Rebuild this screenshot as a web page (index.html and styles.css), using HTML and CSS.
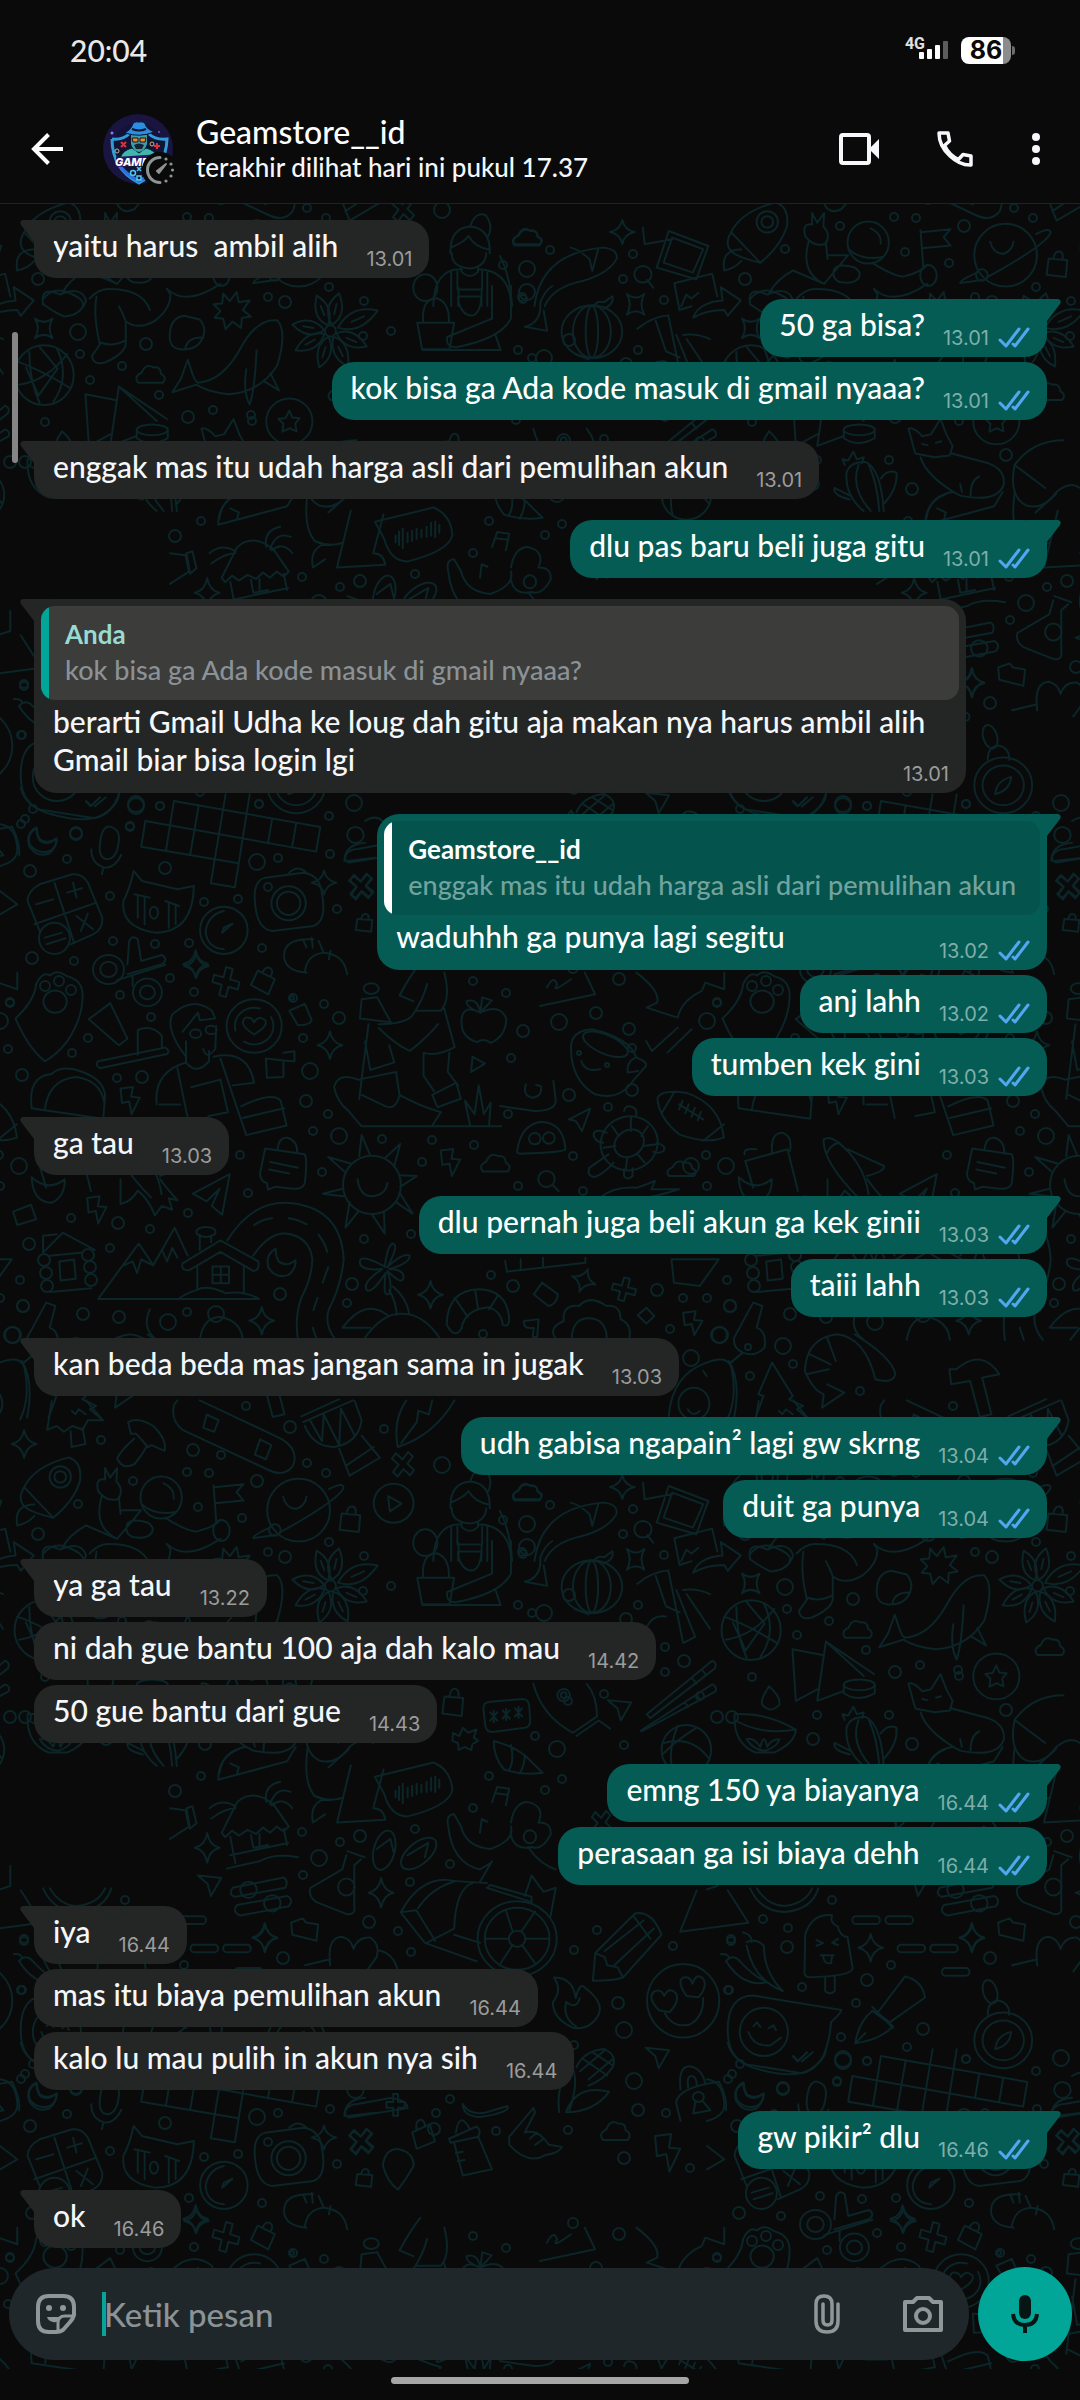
FILE: index.html
```html
<!DOCTYPE html>
<html lang="id">
<head>
    <meta charset="UTF-8">
    <meta name="viewport" content="width=device-width, initial-scale=1.0">
    <title>Geamstore__id</title>
    <link rel="stylesheet" href="styles.css">
</head>
<body>
    <!-- Status bar -->
    <div class="status-bar">
        <span class="clock">20:04</span>
        <div class="status-icons">
            <span class="network">4G</span>
            <svg class="signal" width="30" height="20" viewBox="0 0 30 20">
                <rect x="0" y="12" width="5" height="7" rx="1" fill="#fff"/>
                <rect x="8" y="9" width="5" height="10" rx="1" fill="#fff"/>
                <rect x="16" y="5" width="5" height="14" rx="1" fill="#fff"/>
                <rect x="24" y="1" width="5" height="18" rx="1" fill="#5c5c5c"/>
            </svg>
            <div class="battery">86</div>
            <span class="battery-cap"></span>
        </div>
    </div>

    <!-- Chat header -->
    <header class="header">
        <button class="icon-btn back" aria-label="Kembali">
            <svg width="36" height="36" viewBox="0 0 36 36" fill="none" stroke="#fff" stroke-width="4">
                <path d="M18.500 3.500L4 18L18.500 32.500M4 18H33"/>
            </svg>
        </button>
        <div class="avatar">
            <svg width="72" height="72" viewBox="0 0 72 72">
                <circle cx="35" cy="36" r="35" fill="#191440"/>
                <circle cx="35" cy="36" r="26" fill="#14123a"/>
                <circle cx="9" cy="20" r="1.500" fill="#7c80ff"/>
                <circle cx="56" cy="19" r="1" fill="#6a5cc8"/>
                <path d="M9 26Q20 27 26 21M9 26Q9 56 36 70Q63 56 64 26Q52 27 46 21" fill="#101536" stroke="#2f9bd8" stroke-width="3"/>
                <path d="M17 53Q24 62 36 68Q48 62 55 53" fill="none" stroke="#2c6fe0" stroke-width="3"/>
                <path d="M17 45Q20 37 29 35L36 40L43 35Q52 37 55 45Z" fill="#3fb6ac" stroke="#0a1a2e"/>
                <path d="M28 22H44V31Q42 38 36 39Q30 38 28 31Z" fill="#3a9fa5"/>
                <path d="M22 20Q28 16 29 13Q30 8 36 9Q42 8 43 13Q44 16 51 19Q37 25 22 20Z" fill="#2b8ee0" stroke="#0b1835"/>
                <path d="M29 16Q36 19 43 16" fill="none" stroke="#0b1835" stroke-width="2"/>
                <path d="M29 25H35V29H30ZM37 25H43L42 29H37Z" fill="#e8892b" stroke="#231018"/>
                <path d="M31 32Q36 29 41 32L39 36H33Z" fill="#132338"/>
                <path d="M18 29L23 34M23 29L18 34M54 30V36M51 33H57" stroke="#e0303c" stroke-width="2"/>
                <circle cx="14" cy="38" r="2" fill="none" stroke="#c8b48a"/>
                <circle cx="49" cy="31" r="2" fill="none" stroke="#c8b48a"/>
                <path d="M13 44L58 41L56 51L13 54Z" fill="#2a1763"/>
                <text class="avatar-text" x="12" y="53">GAME</text>
                <path d="M34 54L38 58M38 54L34 58" stroke="#52c8ea" stroke-width="1.500"/>
                <circle cx="30" cy="60" r="2.500" fill="none" stroke="#52c8ea" stroke-width="1.500"/>
                <rect x="34" y="63" width="4" height="4" fill="none" stroke="#52c8ea" stroke-width="1.500"/>
            </svg>
            <svg class="timer" width="38" height="38" viewBox="0 0 38 38">
                <circle cx="19" cy="19" r="18" fill="#0a0a0a"/>
                <path d="M19 6.500A12.500 12.500 0 0 0 19 31.500" fill="none" stroke="#8d9496" stroke-width="3" stroke-linecap="round"/>
                <path d="M16 20L25 13L18 22Z" fill="#8d9496" stroke="#8d9496" stroke-width="2" stroke-linejoin="round"/>
                <g fill="#8d9496">
                    <circle cx="25" cy="8" r="1.600"/><circle cx="30" cy="13" r="1.600"/><circle cx="31.500" cy="19" r="1.600"/>
                    <circle cx="30" cy="25" r="1.600"/><circle cx="25" cy="30" r="1.600"/>
                </g>
            </svg>
        </div>
        <div class="contact">
            <h1>Geamstore__id</h1>
            <p>terakhir dilihat hari ini pukul 17.37</p>
        </div>
        <div class="header-actions">
            <button class="icon-btn" aria-label="Panggilan video">
                <svg width="40" height="36" viewBox="0 0 40 36">
                    <rect x="2" y="4" width="28" height="28" rx="2" fill="none" stroke="#f5f7fa" stroke-width="4"/>
                    <path d="M31 17L40 8V28L31 19Z" fill="#f5f7fa"/>
                </svg>
            </button>
            <button class="icon-btn" aria-label="Panggilan suara">
                <svg width="38" height="38" viewBox="0 0 38 38" fill="none" stroke="#f5f7fa" stroke-width="3.500" stroke-linejoin="round">
                    <path d="M3 3H12L13.500 11L8.500 15.500Q13 25 22.500 29.500L27 24.500L35 26V35Q24 35.500 14 26Q3 16 3 3Z"/>
                </svg>
            </button>
            <button class="icon-btn" aria-label="Menu">
                <svg width="10" height="34" viewBox="0 0 10 34" fill="#f5f7fa">
                    <circle cx="5" cy="5" r="4"/><circle cx="5" cy="17" r="4"/><circle cx="5" cy="29" r="4"/>
                </svg>
            </button>
        </div>
    </header>

    <main class="chat">
        <!-- Doodle wallpaper, one 707x1255 tile repeated in both directions -->
        <svg class="wallpaper" aria-hidden="true">
            <defs>
                <path id="star" d="M0 -36Q6 -6 36 0Q6 6 0 36Q-6 6 -36 0Q-6 -6 0 -36Z"/>
                <path id="plus" d="M-10 -38H10V-10H38V10H10V38H-10V10H-38V-10H-10Z"/>
                <path id="bolt" d="M-28 -32L8 -36L3 -10L28 -8L4 35L-3 2L-24 6Z"/>
                <path id="moon" d="M-18 -38Q-50 -22 -38 12Q-16 42 20 30Q42 14 40 -8Q12 12 -10 -6Q-18 -20 -18 -38Z"/>
                <path id="cloud" d="M-36 20Q-50 4 -26 -6Q-14 -32 8 -20Q30 -22 30 -4Q50 6 36 20Z"/>
                <path id="arrow" d="M-34 -20L34 -14L4 30L-6 0Z"/>
                <path id="petal" d="M0 -18Q-34 -60 0 -112Q32 -60 0 -18M0 -50V-80"/>
                <path id="bag" d="M-28 -14L26 -10L22 34L-34 28ZM-14 -14Q-10 -36 6 -32Q16 -28 12 -12"/>
                <g id="doodles">
                    <g transform="scale(.3444 .3827)">
                        <path d="M130 262Q80 225 45 150Q100 105 105 60Q125 25 145 38Q165 20 195 40Q240 50 240 90Q240 150 195 210Q165 245 130 262"/>
                        <ellipse cx="160" cy="106" rx="34" ry="29"/>
                        <path d="M258 152L320 110L370 203L345 220ZM400 245V180Q440 165 470 195V225M285 262L480 226Q495 235 485 243L290 280Q275 272 285 262"/>
                        <ellipse cx="315" cy="22" rx="45" ry="38"/><ellipse cx="315" cy="22" rx="24" ry="20"/>
                        <ellipse cx="428" cy="82" rx="42" ry="36"/><ellipse cx="428" cy="82" rx="22" ry="18"/>
                        <path d="M340 50L480 10M385 40V65"/>
                        <path d="M540 250Q480 180 500 140Q560 90 615 130L625 150L580 155L575 135L530 185M628 170L625 230Q600 260 590 230M540 210V265Q570 300 607 262V235M455 375Q445 290 540 265M620 250Q720 230 738 318L675 325M515 280L545 410M640 255L715 455L832 430L815 365Q790 340 700 380M463 375H523M555 330L640 310L662 395L605 405M705 410L825 385"/>
                        <ellipse cx="568" cy="190" rx="16" ry="11"/><ellipse cx="613" cy="180" rx="16" ry="11"/>
                        <ellipse cx="738" cy="170" rx="80" ry="70"/><ellipse cx="738" cy="170" rx="56" ry="48" stroke-dasharray="40 14"/>
                        <path d="M738 192Q690 165 712 148Q730 145 738 160Q750 140 770 155Q780 170 738 192"/>
                        <path d="M840 130L885 112L905 154Q900 168 865 168ZM772 255L823 260V303L775 305ZM823 240L855 236V262L823 260"/>
                        <path d="M1160 90Q1190 40 1220 5M1290 30Q1310 100 1280 130H1210M1160 90L1200 105M1240 60Q1230 100 1195 145Q1170 165 1100 165M1045 150L1050 100L1095 95L1135 160ZM1100 175Q1150 220 1190 235Q1240 200 1272 165M1290 125L1320 225Q1270 250 1230 240V300L1260 340M1305 240L1300 290L1330 325M1255 350L1325 318L1338 360L1270 382ZM1060 210L1075 285L1145 265L1130 220M1070 165L1043 360M970 330Q980 290 1040 310L1150 290L1160 350Q1150 390 1120 380L1050 350M970 330Q980 370 1010 390L1050 432H1455M1160 350Q1220 380 1280 395L1255 430M1365 430L1350 365L1378 400L1390 325L1405 400L1425 370L1420 430"/>
                        <ellipse cx="1078" cy="72" rx="22" ry="14"/>
                        <path d="M1395 135Q1340 110 1340 160Q1340 200 1385 212Q1405 200 1425 214Q1470 195 1470 150Q1450 110 1395 135Q1350 120 1355 105Q1385 95 1395 135L1400 95L1428 103L1400 130M1372 250L1408 268L1368 290Z"/>
                        <path d="M92 385Q80 300 150 295Q180 270 240 290Q300 310 305 350L300 412L130 390Q140 310 220 303Q290 310 303 370M92 385L130 390"/>
                        <path d="M770 490L885 505Q893 520 885 580Q880 597 850 595L800 590L778 597L775 580Q755 575 755 555ZM785 525L865 540M782 545L840 555M806 490Q810 460 835 462Q865 470 863 503"/>
                        <ellipse cx="1080" cy="585" rx="84" ry="76"/>
                        <path d="M1043 510L1050 455L1075 508M1118 515L1162 478L1145 535M1160 560L1210 562L1162 590M1150 630L1198 660L1160 605M1080 662L1117 712L1115 658M1040 655L1003 697L1015 630M995 595L937 608L997 615M1000 550L953 512L1020 530M1038 570Q1045 615 1080 615Q1120 612 1125 580"/>
                        <path d="M560 608L667 557L645 663L615 640L638 595L600 628ZM92 565Q95 630 150 632Q190 615 188 570Q140 605 92 565M350 570V635Q380 630 400 600Q430 620 450 665L470 640L500 650L490 620L515 625Q480 590 465 570M38 655L90 637L105 675L50 690Z"/>
                        <path d="M125 762L182 710L275 755M125 718L165 714M125 718V760M145 865L265 855M145 770L240 762M172 785L215 780L220 830L176 835Z"/>
                        <path d="M285 883H752Q710 860 655 868Q600 845 570 860Q540 868 518 883M285 883L403 738L445 795L507 697L545 770M360 795L385 785L398 815L410 780L445 795M470 755L485 785L500 750L515 775M530 790L640 730L750 785Q755 810 735 810L640 760L550 808Q525 810 530 790M573 800V858M708 800V868M617 798H665V842H617ZM641 798V842M617 820H665M580 755V715M613 735V718"/>
                        <ellipse cx="598" cy="708" rx="28" ry="13"/>
                        <path d="M660 730Q730 630 830 632Q990 640 998 780Q990 850 955 910Q940 950 975 990M735 770Q780 710 830 712Q900 720 907 780Q905 830 875 880Q855 930 865 990M738 690Q760 675 790 672M838 672Q865 675 890 688M925 715Q945 740 950 760M953 800L937 840M922 880L910 912M908 958L920 990"/>
                        <path d="M1120 800Q1040 760 1045 790Q1050 810 1110 805Q1050 840 1065 860Q1080 870 1120 815Q1110 880 1130 870Q1140 850 1125 810Q1170 850 1172 825Q1170 805 1130 805Q1190 790 1190 770Q1170 760 1125 800Q1160 740 1140 738Q1125 745 1118 795M1130 860Q1150 890 1152 925M1140 850Q1180 880 1188 920M1055 990Q1110 920 1165 922Q1230 920 1280 990M995 958Q1060 880 1125 925M995 958H1075"/>
                        <path d="M1297 950Q1300 860 1390 858Q1470 860 1478 930Q1480 960 1460 950Q1455 915 1420 905Q1350 910 1340 960Q1320 990 1297 950M1320 880L1358 930M1380 860L1388 910M1445 875L1420 910"/>
                        <path d="M580 990Q590 930 640 930Q700 940 705 990M435 910Q410 960 455 990"/>
                        <path d="M150 1150L137 1225L165 1215L185 1230L210 1215L240 1225L255 1200L298 1200L250 1148M205 1228L208 1270L248 1262L240 1220M372 1205Q400 1190 445 1215Q485 1250 478 1280L440 1265L430 1270L395 1235H380ZM390 1248Q350 1280 340 1300Q355 1330 390 1315Q410 1295 425 1270"/>
                        <path d="M580 1148L820 1250Q870 1280 850 1320Q825 1350 780 1330L530 1225Q495 1200 505 1160L515 1148M590 1220L600 1185L635 1200L622 1230ZM740 1290L755 1250L788 1265L772 1302Z"/>
                        <path d="M875 1190L985 1145M880 1205L1025 1148M885 1215Q910 1270 970 1270Q1040 1260 1050 1200L1030 1150M900 1200L935 1255L940 1185L985 1265L990 1170L1030 1240M985 1275L1015 1345L1103 1298L1050 1240M1003 1320L1085 1270M1155 1270Q1140 1200 1180 1148M1155 1270Q1260 1240 1320 1148M1165 1260L1210 1205L1215 1175L1245 1185L1255 1148"/>
                        <path d="M70 1375Q100 1320 200 1297Q240 1310 232 1360Q215 1410 155 1455L70 1375Q40 1420 100 1440Q130 1450 155 1455M100 1420Q40 1420 50 1475Q80 1470 100 1450"/>
                        <ellipse cx="175" cy="1348" rx="31" ry="28"/><ellipse cx="175" cy="1348" rx="17" ry="15"/>
                        <ellipse cx="468" cy="1402" rx="60" ry="55"/>
                        <path d="M475 1365Q505 1375 505 1405M412 1420Q450 1450 510 1440M340 1510Q270 1480 295 1400M350 1445L345 1400M285 1385Q275 1350 305 1355V1325L320 1350L340 1325L338 1360Q360 1380 345 1405Q310 1415 285 1385M350 1435H410L340 1510L250 1475Q200 1500 180 1535M480 1455Q560 1500 580 1488Q620 1480 640 1460M370 1470Q385 1455 430 1468Q450 1480 440 1495Q425 1512 385 1505Q360 1495 370 1470M620 1370L628 1465M622 1375L707 1367L687 1388L707 1410L625 1417M485 1523Q540 1570 640 1510M125 1550Q150 1520 190 1530Q250 1550 240 1568"/>
                        <ellipse cx="643" cy="1488" rx="24" ry="27"/>
                        <ellipse cx="867" cy="1435" rx="91" ry="82"/><ellipse cx="798" cy="1487" rx="17" ry="15"/>
                        <path d="M955 1380Q1000 1360 997 1378Q980 1410 815 1492M785 1480Q735 1500 735 1508Q760 1505 800 1500M822 1400Q830 1430 860 1432Q885 1425 890 1400"/>
                        <ellipse cx="1143" cy="1417" rx="58" ry="51"/>
                        <path d="M1127 1398L1166 1418L1132 1438Z"/>
                        <path d="M1308 1430Q1305 1365 1365 1360Q1425 1365 1422 1430M1312 1430Q1310 1465 1365 1470Q1410 1465 1412 1430M1310 1415Q1350 1400 1360 1385Q1380 1415 1420 1420M1340 1465V1478Q1365 1500 1388 1478V1465M1258 1568Q1260 1470 1340 1472M1390 1472Q1480 1475 1485 1568M1328 1478V1525H1400V1478M1310 1475V1568M1415 1475V1568M1330 1568V1543H1398V1568M1365 1360Q1380 1320 1410 1330Q1435 1360 1415 1390"/>
                        <ellipse cx="1235" cy="1520" rx="35" ry="35"/>
                        <use href="#star" x="568" y="8"/><use href="#star" x="958" y="220"/><use href="#star" x="760" y="940"/><use href="#star" x="1250" y="872"/><use href="#star" x="70" y="1262"/>
                        <use href="#plus" transform="translate(656 55) rotate(15)"/><use href="#plus" transform="translate(1170 1315) rotate(40) scale(.9)"/>
                        <use href="#bag" transform="translate(770 48) rotate(20)"/><use href="#bag" x="1020" y="1458"/>
                        <use href="#bolt" x="378" y="365"/><use href="#bolt" x="1308" y="527"/><use href="#bolt" x="281" y="651"/>
                        <use href="#cloud" x="1438" y="530"/><use href="#cloud" x="1530" y="1390"/><use href="#moon" x="818" y="790"/>
                    </g>
                    <g transform="translate(170 580) scale(.3444 .408)">
                        <g id="anise">
                            <use href="#petal" transform="translate(466 110) rotate(15) scale(1.200 .85)"/><use href="#petal" transform="translate(466 110) rotate(70) scale(1.200 1.300)"/>
                            <use href="#petal" transform="translate(466 110) rotate(110)"/><use href="#petal" transform="translate(466 110) rotate(150) scale(1.100 .9)"/>
                            <use href="#petal" transform="translate(466 110) rotate(200) scale(1.100 .85)"/><use href="#petal" transform="translate(466 110) rotate(245)"/>
                            <use href="#petal" transform="translate(466 110) rotate(278)"/><use href="#petal" transform="translate(466 110) rotate(335) scale(1.100 .85)"/>
                        </g>
                        <ellipse cx="466" cy="110" rx="16" ry="14"/>
                        <path d="M718 90H825L812 155H732ZM735 90Q730 30 775 30Q812 40 810 90M838 5V40Q850 75 880 72Q905 65 905 10M935 0V80L805 125Q800 150 830 150Q960 130 990 80V0M732 157H960L945 120M1030 100Q1080 90 1075 40Q1090 10 1110 0M1030 100L1095 110L1085 60"/>
                        <ellipse cx="1225" cy="112" rx="88" ry="65"/><ellipse cx="1225" cy="112" rx="55" ry="64"/><ellipse cx="1225" cy="112" rx="18" ry="63"/>
                        <path d="M1230 50Q1240 35 1260 40L1285 25Q1290 45 1260 55M1175 165L1215 180M1357 105Q1400 75 1447 72L1490 250L1525 235L1470 120M1410 85L1440 160L1480 175M1385 210Q1400 180 1440 185M1490 120Q1530 115 1568 130M1500 130L1568 215"/>
                        <path d="M1055 350Q1080 430 1170 470L1240 430Q1240 380 1210 350M1180 478L1245 440L1278 460M940 490Q990 500 1030 525L1082 568Q1020 575 970 560Q940 530 940 490M990 500Q1000 540 985 560M1030 525Q1030 550 1015 570M910 410Q910 395 930 394L1025 387Q1042 388 1043 405L1046 440Q1046 456 1030 458L935 468Q917 468 915 450ZM930 420L950 440M950 420L930 440M940 416V444M966 415L986 435M986 415L966 435M976 411V439M1002 410L1022 430M1022 410L1002 430M1012 406V434"/>
                        <ellipse cx="1143" cy="378" rx="18" ry="15"/><ellipse cx="1143" cy="378" rx="8" ry="7"/>
                        <path d="M822 470L840 478L850 458L866 470L890 462L882 482L895 490L878 498L875 512L855 505L838 512L836 495L820 490Z"/>
                        <path d="M595 578L765 543Q815 560 820 610Q810 650 690 675Q640 675 622 620ZM655 612V628M665 602V635M676 595V642M690 605V628M703 600V625M716 595V620M730 598V616M745 590V615M758 580V612M770 578V615M782 585V605"/>
                        <path d="M400 505Q385 590 420 625Q460 640 500 630M525 550L485 690L625 683Q620 655 590 655L620 560M460 555L520 510M415 690Q405 650 440 635H470M415 690L450 670M140 585Q140 530 200 510M140 585L340 540L365 505M175 545L200 555L195 570"/>
                        <path d="M150 715L195 640Q240 605 300 645L345 700L330 712L310 700L290 715L270 702L250 718L225 708L200 722L180 710L160 726ZM175 725L190 790M330 705L340 745M175 770L343 740M235 720L242 752L285 745M260 718V748M115 655Q150 630 190 650M120 680Q160 655 190 655M280 640Q270 600 320 590M290 645Q310 600 350 615M295 648Q330 625 355 655M165 803Q230 790 260 785Q300 765 372 775"/>
                        <path d="M0 655L45 660L55 700L0 730M48 655L65 650L77 692L58 705ZM515 760L565 775M512 770L500 805L408 850Q400 870 425 885L515 915Q540 915 535 895V795L555 780"/>
                        <ellipse cx="512" cy="848" rx="24" ry="21"/>
                        <ellipse cx="622" cy="758" rx="30" ry="50" transform="rotate(20 622 758)"/><ellipse cx="722" cy="766" rx="28" ry="58" transform="rotate(58 722 766)"/>
                        <path d="M600 755L640 730L650 765M690 770L750 740L740 775"/>
                        <path d="M808 700Q800 670 825 670L845 700Q860 750 930 755Q1000 735 990 700M808 700Q820 790 900 805L930 790M900 835L935 785M1040 750Q1070 790 1120 805M990 690Q1000 640 1040 640Q1090 650 1070 690Q1110 690 1105 720Q1080 760 1050 750Q1000 760 990 720"/>
                        <ellipse cx="1045" cy="725" rx="18" ry="16"/>
                        <path d="M935 640L950 603L985 607L975 648M945 618L980 622M900 715L905 682L922 688"/>
                        <path d="M182 850L330 825Q345 832 335 850L190 872Q168 868 182 850M195 892L340 870Q360 878 345 895L205 918Q178 910 195 892"/>
                        <ellipse cx="228" cy="855" rx="24" ry="20"/><ellipse cx="297" cy="888" rx="24" ry="20"/>
                        <path d="M670 910Q720 830 800 830Q830 835 920 838M670 910L740 985L890 1030M670 910L715 905L770 980M825 950L745 985M825 950Q830 850 880 838M825 965L900 985M720 900Q760 850 825 835M920 850L1050 885V872L930 843ZM1050 820L1085 860L1120 850L1105 920M1050 820L1030 870"/>
                        <ellipse cx="1008" cy="975" rx="115" ry="92"/><ellipse cx="1008" cy="975" rx="94" ry="76"/><ellipse cx="1008" cy="975" rx="24" ry="20"/>
                        <path d="M985 975H915M1032 975H1102M995 957L975 905M1020 957L1060 908M995 990L960 1035M1022 990L1060 1035"/>
                        <path d="M1228 1078L1235 1010L1350 913Q1400 905 1427 965L1315 1070Q1290 1078 1228 1078M1235 1010L1262 1020L1270 1040L1300 1045L1315 1070M1262 1005L1375 930M1290 1040L1405 950M1345 918L1395 975"/>
                        <path d="M1115 1070Q1170 1070 1178 1120Q1190 1080 1205 1095Q1260 1130 1245 1160Q1220 1200 1170 1193Q1110 1170 1112 1130Q1140 1100 1115 1070M1180 1190Q1140 1170 1150 1130Q1180 1150 1190 1120"/>
                        <ellipse cx="1490" cy="1127" rx="105" ry="90"/>
                        <path d="M1437 1158Q1460 1195 1510 1185Q1550 1165 1548 1120M1420 1150Q1385 1120 1405 1105Q1425 1095 1435 1115Q1450 1090 1470 1110Q1480 1130 1450 1155ZM1500 1115Q1470 1080 1490 1070Q1510 1065 1517 1085Q1530 1055 1550 1075Q1560 1095 1535 1118Z"/>
                        <path d="M465 1040Q455 970 500 970Q525 975 533 1000Q545 970 580 972Q610 985 600 1020L570 1055M392 1040L465 1025M605 1003Q650 1010 662 1055M352 935L385 925L395 935L430 940L425 980L355 965Z"/>
                        <path d="M1180 1290Q1200 1250 1260 1245Q1300 1260 1285 1290Q1260 1320 1215 1335M1200 1270L1270 1310M1225 1252L1285 1285M1190 1300L1260 1250M1215 1320L1285 1270M1130 1400Q1120 1330 1165 1285Q1190 1320 1160 1395M1150 1400Q1180 1330 1275 1350Q1230 1400 1150 1400"/>
                        <path d="M810 1465L890 1435Q905 1445 895 1460L815 1475ZM825 1475L850 1555L935 1540L895 1460M830 1450Q840 1395 870 1440M830 1500L850 1497M835 1520L855 1517M985 1460L1055 1390L1060 1400L1030 1450Q1070 1440 1100 1480L1138 1485Q1130 1500 1090 1505Q1040 1530 985 1480ZM1045 1465L1065 1450M1060 1480L1085 1465"/>
                        <path d="M618 1530Q625 1490 660 1490Q705 1495 708 1530Q690 1560 662 1590Q630 1570 618 1530M510 1395Q520 1380 545 1380L640 1365Q690 1370 690 1390L520 1413Q505 1410 510 1395M850 1380Q870 1410 920 1400L980 1385Q990 1400 900 1412Q850 1410 850 1380"/>
                        <use href="#star" x="275" y="972"/><use href="#star" x="108" y="752"/><use href="#star" x="613" y="862"/><use href="#star" x="1352" y="45" transform="rotate(45 1352 45)"/>
                        <use href="#plus" transform="translate(555 1472) rotate(40) scale(.9)"/><use href="#plus" transform="translate(655 1382) scale(.7)"/><use href="#plus" transform="translate(1253 690) rotate(40) scale(.8)"/>
                        <use href="#bag" x="825" y="395"/><use href="#bag" transform="translate(735 1450) rotate(-25)"/>
                        <use href="#cloud" x="1293" y="1448"/><use href="#bolt" transform="translate(1445 1500) scale(1.300)"/><use href="#arrow" x="1415" y="1262"/><use href="#arrow" x="1305" y="410"/><use href="#arrow" x="115" y="840"/>
                    </g>
                    <g transform="translate(540 560) scale(.3444 .3827)">
                        <path d="M745 85Q770 60 800 60Q900 60 920 115M765 80Q755 130 775 205L752 235Q755 260 790 252Q845 230 850 205V145Q890 170 940 140Q980 110 980 75L970 60M775 200Q810 212 848 195M830 105Q845 130 850 145M610 100Q600 50 660 75Q720 50 735 90Q720 130 670 132Q640 120 610 100M390 45L500 20L515 80M390 45L405 115L440 105M410 105L425 75L440 85L460 70M445 135Q460 95 530 90L525 55L583 90L545 130L535 115Q480 115 445 135"/>
                        <path d="M978 190Q975 135 1020 130L1065 140Q1085 160 1075 185Q1060 220 1010 218Q980 215 978 190M1023 215Q1030 185 1075 187M1105 100L1130 98L1133 72L1152 92L1172 68L1178 95L1210 90L1190 115L1213 132L1187 136L1185 162L1160 145L1140 165L1133 138L1108 135L1125 118Z"/>
                        <path d="M985 330L1010 295L1030 245L1045 285Q1050 300 1060 305Q1130 300 1180 220Q1230 135 1290 142Q1320 170 1290 260Q1240 330 1150 335Q1090 330 1055 310ZM1230 220Q1225 320 1210 362Q1190 330 1200 270M1270 280L1295 325L1250 300"/>
                        <ellipse cx="613" cy="285" rx="86" ry="78"/>
                        <path d="M535 250Q600 270 690 320M540 310Q620 300 680 230M570 225Q570 300 600 358M650 215Q690 290 640 355M560 265L597 338L652 268L600 212"/>
                        <path d="M733 335L820 350M733 335L743 470L805 440M830 315L805 470L880 445M830 315L970 400M830 315L940 405M882 428V450Q925 475 972 450V428"/>
                        <ellipse cx="927" cy="428" rx="45" ry="14"/>
                        <path d="M565 505Q560 580 625 605H680Q740 580 743 545Q660 500 565 505M565 520Q640 560 743 545M665 432Q700 460 695 480Q670 505 645 480Q640 465 665 432M600 570Q620 600 655 600Q690 590 695 570Q670 570 660 590Q650 550 640 590Q620 565 600 570"/>
                        <path d="M310 505L500 365Q515 370 508 385L320 515ZM292 548L500 427Q515 432 510 445L295 550M440 410L455 425M470 388L482 402M420 475L432 485M455 455L465 468"/>
                        <ellipse cx="425" cy="598" rx="72" ry="65"/>
                        <path d="M360 580Q440 560 490 620M400 535Q370 600 385 650M455 540Q400 570 355 610"/>
                        <path d="M940 640Q885 600 890 540Q900 510 945 512Q990 530 998 640M925 520Q900 580 960 640M955 520Q980 570 985 640M990 555Q1010 530 1035 540Q1040 580 1000 620M900 610Q850 600 855 580L900 600M885 520L878 505L895 508L910 485L920 505L940 500L935 515"/>
                        <path d="M1070 425Q1085 420 1110 445L1135 440L1163 400L1180 440L1198 470L1190 495L1145 500L1090 490L1085 475ZM1195 490L1300 515Q1350 530 1347 570Q1330 620 1220 600L1200 590M1105 500Q1120 545 1200 590Q1130 600 1122 660M1250 600Q1250 560 1275 550M1225 590L1220 570M1110 465L1125 468M1150 462L1165 458"/>
                        <ellipse cx="1325" cy="406" rx="67" ry="60"/>
                        <path d="M1325 378L1334 396L1355 398L1342 412L1346 432L1326 424L1305 433L1308 412L1293 400L1314 397ZM1378 520Q1430 455 1520 455M1378 520L1467 580M1378 520Q1360 600 1410 625Q1460 640 1500 590Q1540 560 1568 580"/>
                        <path d="M455 965L407 1073L605 1050L545 965M610 960Q640 1020 710 1022Q790 1015 808 960M630 960Q660 1005 710 1006Q770 1000 790 960M600 1100Q630 1090 650 1110Q650 1180 705 1228Q620 1200 600 1110M540 1150Q560 1130 580 1150Q620 1190 660 1205Q590 1220 540 1150M590 1075Q615 1080 615 1100M525 1132Q545 1130 550 1142"/>
                        <path d="M768 1180L770 1080Q790 1025 848 1030Q840 1050 865 1060Q870 1085 893 1087L908 1170Q900 1190 780 1192Q768 1190 768 1180M828 1192V1228Q842 1240 856 1228V1190M803 1095L822 1103L803 1110M865 1092L848 1102L865 1108M815 1135H853M822 1137Q825 1160 845 1155L848 1137"/>
                        <rect x="907" y="1033" width="80" height="20" rx="10"/><rect x="1003" y="1033" width="80" height="20" rx="10"/>
                        <rect x="1038" y="1107" width="80" height="20" rx="10"/><rect x="1133" y="1107" width="80" height="20" rx="10"/><rect x="1167" y="1168" width="80" height="20" rx="10"/>
                        <path d="M545 1330Q545 1240 620 1240L875 1278Q875 1285 845 1310Q835 1430 760 1443L600 1420Q545 1400 545 1330M605 1335Q620 1375 670 1370L700 1350M620 1320L630 1310L640 1322M665 1325L678 1318L685 1330M735 1400L748 1412L775 1388M760 1412L792 1388"/>
                        <ellipse cx="650" cy="1335" rx="70" ry="63"/>
                        <path d="M915 1365Q925 1310 965 1280L1025 1320Q990 1355 915 1365L945 1338M980 1285L1060 1190Q1110 1200 1118 1245L1015 1310ZM965 1270L1025 1325"/>
                        <ellipse cx="1345" cy="1357" rx="84" ry="73"/><ellipse cx="1345" cy="1357" rx="60" ry="52"/><ellipse cx="1307" cy="1230" rx="20" ry="32" transform="rotate(-20 1307 1230)"/>
                        <path d="M1368 1335Q1365 1370 1322 1380Q1325 1345 1368 1335M1300 1290Q1300 1255 1332 1253Q1365 1260 1362 1290"/>
                        <path d="M395 1520Q400 1480 520 1465Q545 1510 540 1540M395 1520L408 1568M408 1485Q400 1425 435 1425Q470 1430 480 1470M430 1480Q425 1450 440 1450Q455 1450 455 1475M452 1515L445 1548L495 1540L472 1515"/>
                        <ellipse cx="460" cy="1505" rx="16" ry="13"/>
                        <use href="#cloud" x="922" y="285"/><use href="#cloud" x="1480" y="330"/><use href="#star" x="612" y="163" transform="rotate(45 612 163)"/><use href="#star" x="960" y="1115"/><use href="#star" x="1255" y="1090"/>
                        <use href="#moon" x="608" y="1505"/>
                    </g>
                    <g transform="translate(0 875) scale(.3444 .3333)">
                        <path d="M505 660L930 738L918 812L422 720L410 797L688 846M505 660L482 808M577 673L552 822M655 640L612 907L682 919L725 640M790 715L778 787M860 726L848 799"/>
                        <path d="M388 870L412 900L515 925L563 915Q560 1055 450 1055Q350 1040 358 960Q375 930 388 870M390 940L435 950M400 945V1010M420 950V1030M480 960L520 975M490 965V1040M510 972V1030"/>
                        <ellipse cx="447" cy="995" rx="12" ry="18"/>
                        <path d="M80 960Q80 930 115 910L210 880Q240 878 255 905L297 1010Q300 1045 270 1060L205 1090M80 960L115 1050M158 905L215 1085M100 1030L280 965M105 970L155 955M195 935L238 922M212 905L222 950M222 1005L270 1045M255 998L235 1050M130 1070L180 1055M135 1090L190 1072"/>
                        <ellipse cx="158" cy="1072" rx="45" ry="47"/>
                        <ellipse cx="650" cy="1048" rx="69" ry="71"/>
                        <path d="M650 1105Q600 1100 597 1050Q605 1000 650 990M675 1028L645 1055L650 1040Z"/>
                        <path d="M740 960Q735 900 770 890L880 875Q930 880 935 940Q950 1020 910 1035L790 1050Q745 1045 740 960M840 875Q865 850 890 875"/>
                        <ellipse cx="838" cy="967" rx="50" ry="51"/><ellipse cx="838" cy="967" rx="34" ry="35"/>
                        <path d="M290 790Q295 735 320 737Q350 745 345 780Q340 830 315 835Q285 835 290 790M265 805Q265 850 305 860Q335 860 352 822M300 860L296 880M910 1075Q820 1070 825 1130Q830 1170 890 1175M880 1075L890 1100M905 1070L908 1100M925 1080L940 1115Q890 1120 885 1175M940 1115Q1000 1120 1008 1180M960 1110L955 1135M1060 720Q1090 700 1110 720M1000 840Q1000 790 1060 785M1010 840L1090 830"/>
                        <ellipse cx="1032" cy="762" rx="24" ry="24"/>
                        <path d="M60 620Q75 680 150 700Q250 730 300 700Q345 670 345 640M250 660L265 675L290 650M0 730Q45 735 50 800Q55 840 0 855M0 930L50 970L0 1000M30 90V150L0 160M370 1150L375 1080Q385 1060 400 1075L410 1140L470 1122Q490 1135 470 1150L370 1180"/>
                        <use href="#star" x="941" y="905"/><use href="#plus" transform="translate(1049 916) rotate(40)"/><use href="#star" x="570" y="1155"/><use href="#moon" x="125" y="780"/><use href="#bag" transform="translate(1060 1025) scale(.8)"/>
                    </g>
                    <g transform="translate(500 120) scale(.3444 .3333)">
                        <path d="M50 210Q60 130 120 122Q185 125 190 205Q185 215 60 218Q48 218 50 210M200 115L262 83L238 150L220 120ZM0 75L100 90Q160 90 162 60L155 0M75 10Q65 45 95 50Q125 45 118 15L105 12"/>
                        <ellipse cx="101" cy="173" rx="17" ry="17"/><ellipse cx="142" cy="171" rx="17" ry="17"/>
                        <ellipse cx="375" cy="187" rx="84" ry="80" transform="rotate(-30 375 187)"/><ellipse cx="375" cy="187" rx="46" ry="38" transform="rotate(-40 375 187)"/>
                        <path d="M360 90Q365 70 385 78Q400 85 395 105M310 155Q270 140 272 165Q280 185 300 185M315 220L260 260Q250 285 275 288Q300 280 330 245M455 185Q485 195 475 210Q460 220 445 212M360 265V285Q370 300 385 285V262M380 110V150M325 135L345 165M430 135L410 165M300 200L335 195M455 190L415 195M365 265L370 230M420 245L400 220"/>
                        <path d="M457 50Q470 25 540 35Q640 70 650 170Q600 190 520 160Q460 110 457 50M520 70L590 115M530 60L520 85M548 70L538 96M566 80L556 108M584 92L574 118M505 35L470 95M650 130L590 180"/>
                        <path d="M153 312L170 330M290 350Q330 315 400 320L450 300L440 325L520 325Q460 345 420 350M15 540L20 572L248 545V530M60 535V565M125 530V558M498 535L505 605L580 615L635 535ZM122 605L168 640Q165 670 140 675L98 640Z"/>
                        <ellipse cx="135" cy="294" rx="24" ry="24"/>
                        <path d="M160 770Q140 740 185 720Q180 670 230 675Q260 640 310 675Q350 670 350 715Q385 730 375 775M208 775Q210 710 260 712Q310 715 310 775M70 720L112 715L108 768L95 768L98 740Q65 745 70 720M400 703L425 680L448 705L425 728Z"/>
                        <path d="M680 770L735 665L762 675L745 740Q775 750 768 800Q740 830 705 815Q675 800 680 770M670 845L705 815M490 1005Q500 880 600 845Q660 820 672 860Q690 950 660 1015M665 840Q700 900 680 1010M590 870L600 885M545 985Q560 1010 580 990"/>
                        <ellipse cx="563" cy="968" rx="45" ry="48"/>
                        <path d="M790 845L750 940L765 945L742 1010M790 845L850 945L840 955L880 975L862 985L900 1018M810 990L820 1000L830 985L850 1000M885 870Q890 770 980 760Q1060 770 1090 895Q1140 910 1148 880Q1140 830 1030 760M885 870Q910 930 940 940L935 980L1000 935L950 910M900 820L960 850M950 770L975 840M890 880L955 865M1305 865H1325Q1400 800 1450 880L1400 890L1427 1000L1393 1008L1365 900L1310 910Z"/>
                        <path d="M712 240L835 205L865 330M712 240L735 320M710 220Q705 200 745 205M790 215Q785 155 820 155Q850 165 842 210M940 175Q960 160 1000 200Q1060 260 1070 340M940 175Q935 240 1040 350M1010 205L1115 255Q1120 270 1065 285M950 215Q960 190 985 185"/>
                        <path d="M100 1440Q120 1280 300 1265Q345 1270 338 1300Q310 1350 220 1370Q150 1390 130 1440M205 1265Q230 1270 260 1300L268 1335L285 1270M415 1205L420 1255L500 1240M490 1215L605 1260L570 1360L455 1325ZM500 1235L590 1270L560 1340L475 1310ZM427 1362L445 1385M0 1290Q30 1350 35 1440"/>
                        <ellipse cx="415" cy="1345" rx="25" ry="25"/>
                        <use href="#cloud" x="527" y="265"/><use href="#cloud" x="80" y="1235"/><use href="#plus" transform="translate(360 625) rotate(15) scale(.9)"/><use href="#bolt" x="560" y="727"/><use href="#star" x="355" y="1218"/><use href="#star" x="243" y="598" transform="rotate(20 243 598)"/>
                    </g>
                    <g transform="translate(540 -380) scale(.3444 .3333)">
                        <path d="M90 1400Q90 1350 150 1345Q260 1370 280 1430Q310 1440 308 1455L270 1500Q230 1560 160 1540Q90 1500 90 1400M278 1430Q250 1440 255 1475L285 1470M120 1440Q130 1475 175 1465M308 1380L325 1410L400 1340M370 1415L440 1345M280 1175Q350 1230 340 1265L310 1280L400 1310Q410 1260 470 1230L480 1205L535 1225V1175M0 1275L160 1240L130 1175M20 1220Q40 1180 50 1210Q30 1240 90 1195"/>
                        <ellipse cx="190" cy="1390" rx="70" ry="28" transform="rotate(24 190 1390)"/>
                    </g>
                </g>
            </defs>
            <g id="tiles"></g>
        </svg>
        <span class="scroll-thumb"></span>

        <!-- Messages -->
        <div class="messages">
            <div class="msg in tail"><p>yaitu harus &nbsp;ambil alih</p><span class="meta">13.01</span></div>

            <div class="msg out tail"><p>50 ga bisa?</p><span class="meta">13.01<svg class="ticks"><use href="#ticks"/></svg></span></div>
            <div class="msg out"><p>kok bisa ga Ada kode masuk di gmail nyaaa?</p><span class="meta">13.01<svg class="ticks"><use href="#ticks"/></svg></span></div>

            <div class="msg in tail"><p>enggak mas itu udah harga asli dari pemulihan akun</p><span class="meta">13.01</span></div>

            <div class="msg out tail"><p>dlu pas baru beli juga gitu</p><span class="meta">13.01<svg class="ticks"><use href="#ticks"/></svg></span></div>

            <div class="msg in tail quoted">
                <blockquote>
                    <strong>Anda</strong>
                    <q>kok bisa ga Ada kode masuk di gmail nyaaa?</q>
                </blockquote>
                <p>berarti Gmail Udha ke loug dah gitu aja makan nya harus ambil alih Gmail biar bisa login lgi <span class="meta">13.01</span></p>
            </div>

            <div class="msg out tail quoted">
                <blockquote>
                    <strong>Geamstore__id</strong>
                    <q>enggak mas itu udah harga asli dari pemulihan akun</q>
                </blockquote>
                <p>waduhhh ga punya lagi segitu <span class="meta">13.02<svg class="ticks"><use href="#ticks"/></svg></span></p>
            </div>
            <div class="msg out"><p>anj lahh</p><span class="meta">13.02<svg class="ticks"><use href="#ticks"/></svg></span></div>
            <div class="msg out"><p>tumben kek gini</p><span class="meta">13.03<svg class="ticks"><use href="#ticks"/></svg></span></div>

            <div class="msg in tail"><p>ga tau</p><span class="meta">13.03</span></div>

            <div class="msg out tail"><p>dlu pernah juga beli akun ga kek ginii</p><span class="meta">13.03<svg class="ticks"><use href="#ticks"/></svg></span></div>
            <div class="msg out"><p>taiii lahh</p><span class="meta">13.03<svg class="ticks"><use href="#ticks"/></svg></span></div>

            <div class="msg in tail"><p>kan beda beda mas jangan sama in jugak</p><span class="meta">13.03</span></div>

            <div class="msg out tail"><p>udh gabisa ngapain² lagi gw skrng</p><span class="meta">13.04<svg class="ticks"><use href="#ticks"/></svg></span></div>
            <div class="msg out"><p>duit ga punya</p><span class="meta">13.04<svg class="ticks"><use href="#ticks"/></svg></span></div>

            <div class="msg in tail"><p>ya ga tau</p><span class="meta">13.22</span></div>
            <div class="msg in"><p>ni dah gue bantu 100 aja dah kalo mau</p><span class="meta">14.42</span></div>
            <div class="msg in"><p>50 gue bantu dari gue</p><span class="meta">14.43</span></div>

            <div class="msg out tail"><p>emng 150 ya biayanya</p><span class="meta">16.44<svg class="ticks"><use href="#ticks"/></svg></span></div>
            <div class="msg out"><p>perasaan ga isi biaya dehh</p><span class="meta">16.44<svg class="ticks"><use href="#ticks"/></svg></span></div>

            <div class="msg in tail"><p>iya</p><span class="meta">16.44</span></div>
            <div class="msg in"><p>mas itu biaya pemulihan akun</p><span class="meta">16.44</span></div>
            <div class="msg in"><p>kalo lu mau pulih in akun nya sih</p><span class="meta">16.44</span></div>

            <div class="msg out tail"><p>gw pikir² dlu</p><span class="meta">16.46<svg class="ticks"><use href="#ticks"/></svg></span></div>

            <div class="msg in tail"><p>ok</p><span class="meta">16.46</span></div>
        </div>

        <!-- Composer -->
        <form class="composer">
            <div class="input-bar">
                <button type="button" class="icon-btn" aria-label="Stiker">
                    <svg width="40" height="40" viewBox="0 0 40 40" fill="none" stroke="#8f9799" stroke-width="4">
                        <path d="M13 2H27Q38 2 38 13V21Q37 25 34 28L27 36Q24 38 20 38H13Q2 38 2 27V13Q2 2 13 2Z"/>
                        <path d="M22 37V29Q22 22 29 22H37" stroke-width="3"/>
                        <path d="M11 23H22Q24 23 22 27Q20 29 17 28Q12 27 11 23Z" fill="#8f9799" stroke="none"/>
                        <circle cx="13" cy="14" r="3" fill="#8f9799" stroke="none"/><circle cx="27" cy="14" r="3" fill="#8f9799" stroke="none"/>
                    </svg>
                </button>
                <div class="field">
                    <input type="text" id="message" aria-label="Ketik pesan" placeholder="Ketik pesan">
                    <span class="caret"></span>
                </div>
                <button type="button" class="icon-btn" aria-label="Lampirkan">
                    <svg width="26" height="40" viewBox="0 0 26 40" fill="none" stroke="#8f9799" stroke-width="3.500" stroke-linecap="round">
                        <path d="M24 10V27Q24 38 13 38Q2 38 2 27V10Q2 2 10 2Q18 2 18 10V26Q18 31 13.500 31Q9 31 9 26V10"/>
                    </svg>
                </button>
                <button type="button" class="icon-btn camera" aria-label="Kamera">
                    <svg width="40" height="38" viewBox="0 0 40 38" fill="none" stroke="#8f9799" stroke-width="4" stroke-linejoin="round">
                        <path d="M2 7H10L14 3H26L30 7H38V35H2Z"/>
                        <circle cx="20" cy="21" r="7"/>
                    </svg>
                </button>
            </div>
            <button type="button" class="mic" aria-label="Rekam suara">
                <svg width="28" height="38" viewBox="0 0 28 38">
                    <rect x="8" y="0" width="12" height="24" rx="6" fill="#071615"/>
                    <path d="M2 19Q3 30 14 30Q25 30 26 19M14 30V38" fill="none" stroke="#071615" stroke-width="4"/>
                </svg>
            </button>
        </form>
    </main>

    <div class="nav-bar"><span class="handle"></span></div>

    <svg width="0" height="0" class="sprite">
        <symbol id="ticks" viewBox="0 0 32 22">
            <path d="M2 13L8 19L21 2M15 17L17 19L30 2" fill="none" stroke="#53a6f0" stroke-width="3" stroke-linecap="round" stroke-linejoin="round"/>
        </symbol>
    </svg>

    <script>
        const NS = 'http://www.w3.org/2000/svg';
        const TILE_W = 707;
        const TILE_H = 1255;

        // Small bubbles between the doodles: x, y, radius
        const bubbles = [
            [45, 25, 5], [59, 20, 5], [71, 29, 5], [10, 42, 4], [120, 34, 4], [170, 17, 4], [151, 56, 4], [194, 31, 4], [88, 77, 4],
            [72, 92, 4], [8, 88, 4], [22, 114, 6], [117, 117, 4], [142, 116, 6], [324, 43, 4], [339, 57, 6], [303, 77, 4], [310, 110, 8],
            [306, 140, 6], [328, 153, 4], [313, 170, 4], [339, 175, 8], [382, 178, 4], [432, 179, 4], [474, 184, 4], [508, 153, 4],
            [511, 97, 4], [523, 70, 6], [473, 20, 4], [506, 32, 4], [422, 201, 4], [322, 211, 4], [240, 194, 4], [248, 232, 4],
            [19, 205, 8], [71, 257, 4], [118, 262, 6], [188, 252, 4], [150, 268, 4], [110, 287, 4], [29, 283, 6], [20, 319, 4],
            [23, 345, 6], [83, 353, 6], [119, 356, 6], [187, 351, 4], [168, 361, 8], [13, 374, 8], [280, 333, 6], [352, 323, 6],
            [364, 278, 4], [411, 273, 4], [347, 342, 4], [491, 314, 4], [513, 325, 6], [483, 373, 4], [246, 445, 4], [290, 466, 6],
            [193, 489, 6], [221, 494, 4], [101, 479, 4], [187, 511, 4], [209, 512, 4], [307, 502, 4], [326, 512, 4], [257, 520, 6],
            [384, 468, 4], [442, 504, 8], [133, 520, 4], [78, 543, 4], [198, 546, 4], [242, 557, 4], [38, 573, 6], [329, 581, 4],
            [364, 595, 4], [268, 591, 4], [285, 596, 6], [503, 559, 4], [527, 586, 8], [523, 593, 4], [44, 299, 6], [46, 312, 6],
            [47, 325, 6], [88, 294, 6], [90, 306, 6], [91, 319, 6], [216, 353, 8], [293, 37, 4], [292, 37, 2],
            [391, 625, 4], [363, 630, 4], [518, 644, 4], [544, 652, 8], [638, 644, 4], [626, 658, 6], [684, 700, 6], [665, 686, 4],
            [665, 711, 4], [604, 733, 4], [535, 775, 4], [557, 788, 8], [624, 784, 4], [201, 815, 4], [175, 830, 6], [489, 815, 4],
            [562, 818, 4], [545, 829, 4], [473, 847, 4], [415, 868, 4], [360, 875, 6], [302, 871, 4], [340, 881, 4], [319, 897, 8],
            [303, 914, 4], [410, 921, 4], [450, 903, 4], [369, 961, 6], [398, 970, 4], [411, 991, 4], [283, 997, 6], [597, 969, 4],
            [574, 989, 4], [673, 985, 4], [618, 1042, 6], [624, 1069, 8], [574, 1084, 4], [634, 1120, 8], [638, 1149, 6], [666, 1152, 4],
            [330, 1148, 4], [450, 1138, 4], [436, 1152, 4], [496, 1170, 4], [257, 1156, 8], [278, 1152, 4], [337, 1203, 4], [568, 1169, 4],
            [624, 1197, 6], [690, 1207, 4], [434, 1168, 6], [568, 740, 4], [516, 714, 4], [532, 652, 4], [569, 634, 6], [717, 756, 6],
            [700, 735, 4], [732, 756, 6], [752, 716, 4], [785, 626, 8], [787, 648, 4], [797, 674, 4], [853, 638, 6], [829, 660, 4],
            [866, 689, 4], [895, 711, 6], [889, 754, 4], [920, 704, 4], [959, 715, 4], [958, 709, 4], [1006, 749, 6], [817, 754, 4],
            [813, 778, 6], [912, 783, 6], [787, 986, 6], [788, 967, 4], [763, 958, 4], [832, 939, 4], [891, 1004, 4], [867, 1019, 6],
            [731, 980, 4], [728, 1029, 4], [802, 1026, 4], [843, 1100, 8], [841, 1076, 4], [867, 1100, 4], [923, 1068, 6], [856, 1042, 4],
            [907, 1086, 4], [966, 1098, 4], [1036, 1110, 4], [740, 1103, 4], [783, 1128, 6], [837, 1121, 4], [732, 1113, 4],
            [76, 1127, 6], [130, 1120, 4], [67, 1153, 4], [30, 1165, 6], [136, 1098, 8], [160, 1100, 4], [259, 1098, 4], [354, 1097, 8],
            [110, 1190, 4], [204, 1196, 4], [238, 1193, 4], [268, 1181, 4], [165, 1162, 6], [113, 1235, 4], [32, 1252, 6], [74, 1255, 4],
            [155, 1238, 4], [189, 1237, 4], [262, 1242, 4], [21, 1118, 4], [22, 1029, 4], [24, 978, 4],
            [569, 134, 6], [608, 146, 4], [632, 129, 6], [573, 195, 4], [518, 225, 4], [583, 230, 4], [691, 205, 8],
            [706, 194, 4], [707, 225, 4], [657, 329, 6], [683, 337, 4], [707, 337, 4], [730, 345, 6], [670, 368, 4],
            [719, 374, 8], [783, 385, 8], [750, 415, 4], [793, 403, 4], [860, 430, 4], [691, 397, 8], [748, 386, 3], [527, 563, 8],
            [550, 544, 4], [633, 548, 4], [664, 594, 4], [623, 573, 4], [522, 591, 4], [559, 61, 8], [596, 52, 6], [629, 68, 6],
            [632, 87, 4], [717, 41, 4], [707, 60, 8], [619, 18, 6], [573, 7, 5], [579, 92, 2], [607, 104, 2]
        ];

        const doodles = document.getElementById('doodles');
        bubbles.forEach(([x, y, r]) => {
            const circle = document.createElementNS(NS, 'circle');
            circle.setAttribute('cx', x);
            circle.setAttribute('cy', y);
            circle.setAttribute('r', r);
            doodles.appendChild(circle);
        });

        // Repeat the tile over the whole chat
        const tiles = document.getElementById('tiles');
        for (let row = 0; row < 3; row++) {
            for (let col = -1; col < 3; col++) {
                const use = document.createElementNS(NS, 'use');
                use.setAttribute('href', '#doodles');
                use.setAttribute('x', col * TILE_W);
                use.setAttribute('y', row * TILE_H - 498);
                tiles.appendChild(use);
            }
        }
    </script>
</body>
</html>
```
FILE: styles.css
```css
/* General Styles */
* {
    margin: 0;
    padding: 0;
    box-sizing: border-box;
}

body {
    font-family: 'Lato', 'Noto Sans', sans-serif;
    font-weight: 500;
    background: #0a0a0a;
    color: #fff;
    min-height: 100vh;
    display: flex;
    flex-direction: column;
}

button {
    border: none;
    background: none;
    cursor: pointer;
}

svg {
    display: block;
}

.sprite {
    position: absolute;
}

/* Status bar */
.status-bar {
    height: 94px;
    padding: 6px 65px 0 70px;
    display: flex;
    align-items: center;
    justify-content: space-between;
}

.clock {
    font-size: 30px;
    color: #e8e8e8;
}

.status-icons {
    display: flex;
    align-items: center;
}

.network {
    font-family: 'Roboto', sans-serif;
    font-size: 16px;
    font-weight: 700;
    line-height: 16px;
    color: #e0e0e0;
    margin: 0 -6px 12px 0;
}

.signal {
    margin-right: 12px;
}

.battery {
    width: 50px;
    height: 27px;
    border-radius: 8px;
    background: linear-gradient(to right, #fff 84%, #8c8c8c 84%);
    color: #0a0a0a;
    font-family: 'Inter', sans-serif;
    font-size: 25px;
    font-weight: 700;
    line-height: 27px;
    text-align: center;
}

.battery-cap {
    width: 3px;
    height: 9px;
    margin-left: 1px;
    border-radius: 0 3px 3px 0;
    background: #6c6c6c;
}

/* Header */
.header {
    height: 110px;
    padding: 0 39px 0 30px;
    display: flex;
    align-items: center;
    border-bottom: 1px solid #222;
}

.icon-btn {
    display: flex;
    align-items: center;
    justify-content: center;
    flex-shrink: 0;
}

.avatar {
    position: relative;
    margin-left: 37px;
}

.avatar-text {
    font-family: 'Inter', sans-serif;
    font-size: 11px;
    font-style: italic;
    font-weight: 800;
    fill: #fff;
}

.timer {
    position: absolute;
    right: -4px;
    bottom: -4px;
}

.contact {
    flex: 1;
    margin: 0 20px 0 21px;
}

.contact h1 {
    font-size: 32px;
    font-weight: 500;
    line-height: 36px;
}

.contact p {
    font-size: 26px;
    line-height: 34px;
    color: #f5f7fa;
}

.header-actions {
    display: flex;
    align-items: center;
    gap: 57px;
}

/* Chat */
.chat {
    position: relative;
    flex: 1;
    display: flex;
    flex-direction: column;
    justify-content: space-between;
    padding-bottom: 8px;
    overflow: hidden;
}

.wallpaper {
    position: absolute;
    inset: 0;
    width: 100%;
    height: 100%;
    fill: none;
    stroke: #0b2528;
    stroke-width: 2px;
    stroke-linecap: round;
    stroke-linejoin: round;
}

.wallpaper * {
    vector-effect: non-scaling-stroke;
}

.scroll-thumb {
    position: absolute;
    left: 12px;
    top: 128px;
    width: 6px;
    height: 131px;
    border-radius: 3px;
    background: #858585;
}

.messages {
    position: relative;
    display: flex;
    flex-direction: column;
    gap: 5px;
    padding: 0 33px 17px 34px;
}

.msg {
    position: relative;
    display: flex;
    max-width: 92%;
    border-radius: 22px;
}

.msg p {
    padding: 6px 0 14px;
    font-size: 30px;
    line-height: 38px;
}

.msg.tail {
    margin-top: 16px;
}

.msg.tail::before {
    content: '';
    position: absolute;
    top: 0;
    width: 34px;
    height: 22px;
    background: inherit;
}

.in {
    align-self: flex-start;
    padding: 0 17px 0 19px;
    gap: 28px;
    background: #242626;
    color: #f5f7fa;
}

.in.tail::before {
    left: -14px;
    clip-path: path('M3 0H34V22H14L1 5Q-1 1 3 0Z');
}

.out {
    align-self: flex-end;
    padding: 0 17px 0 19px;
    gap: 18px;
    background: #045c55;
}

.out.tail::before {
    right: -14px;
    clip-path: path('M31 0H0V22H20L33 5Q35 1 31 0Z');
}

.meta {
    align-self: flex-end;
    display: flex;
    align-items: center;
    gap: 9px;
    margin-bottom: 7px;
    font-family: 'Inter', sans-serif;
    font-size: 20px;
    font-weight: 400;
    line-height: 24px;
    color: #9b9c9c;
}

.out .meta {
    color: #7faeaa;
}

.ticks {
    width: 32px;
    height: 22px;
}

/* Replies */
.quoted {
    display: block;
    padding: 7px 7px 0;
}

.quoted p {
    padding: 2px 10px 15px 12px;
}

.quoted .meta {
    float: right;
    margin: 22px 0 -22px;
}

.quoted blockquote {
    position: relative;
    padding: 11px 24px 13px;
    border-radius: 14px;
    background: linear-gradient(to right, #02a698 8px, #3c3c3a 8px);
    line-height: 35px;
}

.quoted strong {
    display: block;
    font-size: 26px;
    font-weight: 700;
    color: #98dbd2;
}

.quoted q {
    display: block;
    quotes: none;
    font-size: 27px;
    color: #8b9297;
}

.out.quoted blockquote {
    background: linear-gradient(to right, #fff 8px, #04534c 8px);
}

.out.quoted strong {
    color: #fff;
}

.out.quoted q {
    color: #73a39f;
}

/* Composer */
.composer {
    position: relative;
    display: flex;
    align-items: center;
    gap: 9px;
    padding: 0 8px 0 9px;
}

.input-bar {
    flex: 1;
    height: 92px;
    padding: 0 26px 0 27px;
    display: flex;
    align-items: center;
    border-radius: 46px;
    background: #1f272b;
}

.field {
    position: relative;
    flex: 1;
    margin: 0 20px 0 26px;
}

.field input {
    display: block;
    width: 100%;
    height: 44px;
    border: none;
    outline: none;
    background: transparent;
    color: #fff;
    font-family: inherit;
    font-size: 33px;
    font-weight: 500;
    padding-left: 2px;
}

.field input::placeholder {
    color: #8b9397;
}

.caret {
    position: absolute;
    left: 0;
    top: 0;
    width: 4px;
    height: 44px;
    background: #06a598;
}

.camera {
    margin-left: 63px;
}

.mic {
    width: 94px;
    height: 94px;
    border-radius: 50%;
    background: #02a698;
    display: flex;
    align-items: center;
    justify-content: center;
}

/* Navigation bar */
.nav-bar {
    height: 31px;
    display: flex;
    justify-content: center;
    padding-top: 8px;
}

.handle {
    width: 298px;
    height: 7px;
    border-radius: 4px;
    background: #a6a6a6;
}
```
